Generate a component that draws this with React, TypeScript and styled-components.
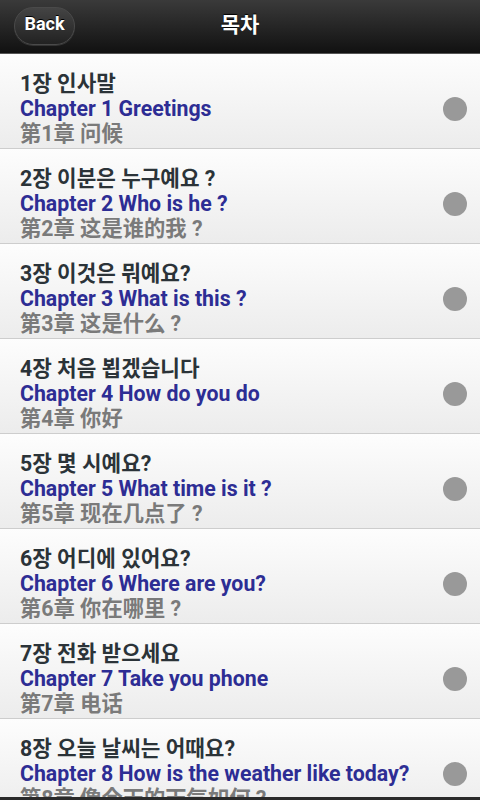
import React from "react";
import styled, {createGlobalStyle} from "styled-components";

type Chapter = {
    ko: string,
    en: string,
    zh: string,
};

const chapters: Chapter[] = [
    {ko: '1장 인사말', en: 'Chapter 1 Greetings', zh: '第1章 问候'},
    {ko: '2장 이분은 누구예요 ?', en: 'Chapter 2 Who is he ?', zh: '第2章 这是谁的我 ?'},
    {ko: '3장 이것은 뭐예요?', en: 'Chapter 3 What is this ?', zh: '第3章 这是什么 ?'},
    {ko: '4장 처음 뵙겠습니다', en: 'Chapter 4 How do you do', zh: '第4章 你好'},
    {ko: '5장 몇 시예요?', en: 'Chapter 5 What time is it ?', zh: '第5章 现在几点了 ?'},
    {ko: '6장 어디에 있어요?', en: 'Chapter 6 Where are you?', zh: '第6章 你在哪里 ?'},
    {ko: '7장 전화 받으세요', en: 'Chapter 7 Take you phone', zh: '第7章 电话'},
    {ko: '8장 오늘 날씨는 어때요?', en: 'Chapter 8 How is the weather like today?', zh: '第8章 像今天的天气如何 ?'},
];

const App: React.FC = () => {
    return (
        <Page>
            <GlobalStyle/>
            <Header>
                <BackButton>Back</BackButton>
                <Title>목차</Title>
            </Header>
            <List>
                {chapters.map((ch, i) => (
                    <Row key={i}>
                        <Texts>
                            <KoLine>{ch.ko}</KoLine>
                            <EnLine>{ch.en}</EnLine>
                            <ZhLine>{ch.zh}</ZhLine>
                        </Texts>
                        <Dot/>
                    </Row>
                ))}
            </List>
            <Footer/>
        </Page>
    );
};

export default App;


const GlobalStyle = createGlobalStyle`
    html, body {
        margin: 0;
        padding: 0;
        background: #f2f2f2;
    }
    body {
        font-family: Roboto, "Noto Sans CJK KR", "Noto Sans CJK SC", sans-serif;
    }
`;

const Page = styled.div`
    display: flex;
    flex-direction: column;
    height: 100vh;
    overflow: hidden;
`;

const Header = styled.div`
    position: relative;
    display: flex;
    align-items: center;
    justify-content: center;
    flex: 0 0 53px;
    background: linear-gradient(#3a3a3a, #111111);
    border-bottom: 1px solid #555;
`;

const BackButton = styled.div`
    position: absolute;
    left: 14px;
    top: 7px;
    width: 61px;
    height: 38px;
    box-sizing: border-box;
    display: flex;
    align-items: center;
    justify-content: center;
    padding-bottom: 5px;
    border-radius: 19px;
    border: 1px solid #4a4a4a;
    background: linear-gradient(#444, #222);
    box-shadow: 0 1px 0 rgba(255, 255, 255, 0.12);
    color: #fff;
    font-weight: 700;
    font-size: 18px;
    text-shadow: 0 -1px 0 #000;
`;

const Title = styled.div`
    color: #fff;
    font-weight: 700;
    font-size: 21px;
    text-shadow: 0 -1px 1px #000;
    margin-top: -8px;
`;

const List = styled.div`
    flex: 1;
    overflow: hidden;
`;

const Row = styled.div`
    display: flex;
    align-items: center;
    height: 94px;
    padding: 0 13px 0 20px;
    border-bottom: 1px solid #cdcdcd;
    background: linear-gradient(#fdfdfd, #ececec);
`;

const Texts = styled.div`
    flex: 1;
    display: flex;
    flex-direction: column;
    padding-top: 14px;
    font-weight: 700;
    font-size: 21.3px;
    line-height: 25px;
    white-space: nowrap;
`;

const KoLine = styled.div`
    color: #2b3338;
`;

const EnLine = styled.div`
    color: #2d2d94;
`;

const ZhLine = styled.div`
    color: #7a7a7a;
`;

const Dot = styled.div`
    width: 24px;
    height: 24px;
    margin-top: 16px;
    border-radius: 50%;
    background: #999;
`;

const Footer = styled.div`
    flex: 0 0 3px;
    background: #2a2a2a;
`;
